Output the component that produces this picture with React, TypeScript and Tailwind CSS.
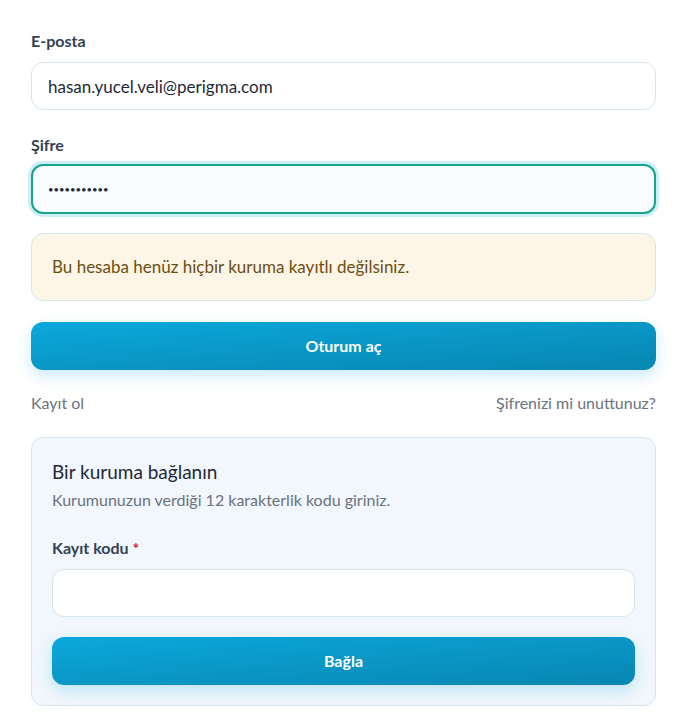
import { useState } from "react";

const inputBase =
  "h-12 w-full rounded-xl border px-4 text-[17px] text-[#1f2937] outline-none";
const labelCls = "text-base font-bold leading-[22px] text-[#334155]";
const btnCls =
  "h-12 w-full rounded-xl bg-gradient-to-br from-[#0ba8dc] to-[#0886b1] text-base font-bold text-white shadow-[0_6px_16px_rgba(14,165,217,0.22)]";

function App() {
  const [email, setEmail] = useState("hasan.yucel.veli@perigma.com");
  const [password, setPassword] = useState("12345678901");
  const [code, setCode] = useState("");

  return (
    <div
      className="min-h-[727px] bg-white pl-[31px] pr-[28px] pt-[30px]"
      style={{ fontFamily: "Lato, 'Noto Sans', sans-serif" }}
    >
      <form className="flex w-[625px] flex-col" onSubmit={(e) => e.preventDefault()}>
        <label className={`${labelCls} mb-[10px]`}>E-posta</label>
        <input
          value={email}
          onChange={(e) => setEmail(e.target.value)}
          className={`${inputBase} border-[#d4e4ef] bg-white`}
        />

        <label className={`${labelCls} mb-[8px] mt-[24px]`}>Şifre</label>
        <input
          type="password"
          value={password}
          onChange={(e) => setPassword(e.target.value)}
          className="h-[50px] w-full rounded-xl border-2 border-[#17a58a] bg-[#f8fcfe] px-[15px] text-[9.5px] text-[#1f2937] shadow-[0_0_0_3px_#cdeef7] outline-none"
        />

        {/* uyarı */}
        <div className="mt-[19px] flex h-[68px] items-center rounded-xl border border-[#cfe9ef] bg-[#fdf6e7] px-5 text-[17px] text-[#6b4e12]">
          Bu hesaba henüz hiçbir kuruma kayıtlı değilsiniz.
        </div>

        <button className={`${btnCls} mt-[21px]`}>Oturum aç</button>

        <div className="mt-[21px] flex justify-between text-base leading-6 text-[#6b7280]">
          <a href="#">Kayıt ol</a>
          <a href="#">Şifrenizi mi unuttunuz?</a>
        </div>

        <div className="mt-[22px] rounded-xl border border-[#d5e6f1] bg-[#f1f7fc] px-[20px] pb-[20px] pt-[21px]">
          <h3 className="text-[19px] leading-[26px] text-[#1f2937]">Bir kuruma bağlanın</h3>
          <p className="mt-[4px] text-base leading-[22px] text-[#6b7280]">
            Kurumunuzun verdiği 12 karakterlik kodu giriniz.
          </p>

          <label className={`${labelCls} mb-[10px] mt-[26px] block`}>
            Kayıt kodu <span className="text-[#dc2626]">*</span>
          </label>
          <input
            value={code}
            onChange={(e) => setCode(e.target.value)}
            className={`${inputBase} border-[#d4e4ef] bg-white`}
          />

          <button className={`${btnCls} mt-[20px]`}>Bağla</button>
        </div>
      </form>
    </div>
  );
}

export default App;
